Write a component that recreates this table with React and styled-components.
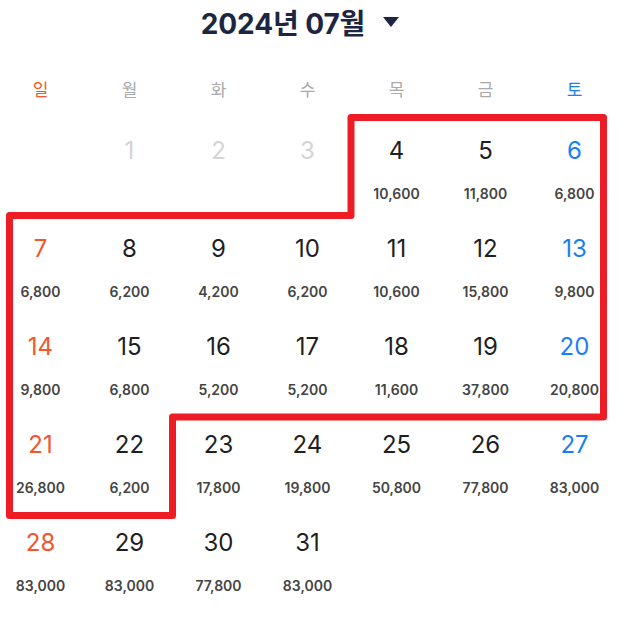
import styled, { createGlobalStyle } from 'styled-components'

const GlobalStyle = createGlobalStyle`
    body{
        margin:0;
        background:#fff;
        font-family:Inter, "Noto Sans CJK KR", sans-serif;
    }
`;

const Wrap = styled.div`
    position:relative;
    width:625px;
    height:617px;
    overflow:hidden;
`;

const Header = styled.div`
    display:flex;
    align-items:center;
    justify-content:center;
    gap:18px;
    height:44px;
    padding-right:25px;
`;

const Title = styled.h1`
    margin:0;
    font-size:28px;
    font-weight:700;
    letter-spacing:-0.1px;
    color:#1c2541;
`;

const Arrow = styled.svg`
    display:block;
`;

const Grid = styled.div`
    display:grid;
    grid-template-columns:repeat(7, 89px);
    width:623px;
    margin-left:-4px;
`;

const WeekRow = styled(Grid)`
    margin-top:24px;
    height:40px;
    align-items:center;
`;

const WeekDay = styled.div`
    text-align:center;
    font-family:"Noto Sans CJK KR", sans-serif;
    font-size:17px;
    color:${p => p.$tone === 'sun' ? '#f4552c' : p.$tone === 'sat' ? '#1b7ef4' : '#aaaaaa'};
`;

const Cell = styled.div`
    height:98px;
    padding-top:29px;
    box-sizing:border-box;
    display:flex;
    flex-direction:column;
    align-items:center;
`;

const DayNum = styled.span`
    font-size:24px;
    line-height:28px;
    color:${p => p.$past ? '#d4d4d4' : p.$tone === 'sun' ? '#f4552c' : p.$tone === 'sat' ? '#1b7ef4' : '#1f1f1f'};
`;

const Price = styled.span`
    margin-top:21px;
    font-size:14px;
    line-height:16px;
    font-weight:600;
    color:#444;
`;

const Outline = styled.svg`
    position:absolute;
    left:0;
    top:0;
    pointer-events:none;
`;

const prices = {
    4:'10,600',5:'11,800',6:'6,800',7:'6,800',8:'6,200',9:'4,200',10:'6,200',
    11:'10,600',12:'15,800',13:'9,800',14:'9,800',15:'6,800',16:'5,200',17:'5,200',
    18:'11,600',19:'37,800',20:'20,800',21:'26,800',22:'6,200',23:'17,800',24:'19,800',
    25:'50,800',26:'77,800',27:'83,000',28:'83,000',29:'83,000',30:'77,800',31:'83,000'
};

const weekDays = ['일','월','화','수','목','금','토'];

function toneOf(i){
    if (i % 7 === 0) return 'sun';
    if (i % 7 === 6) return 'sat';
    return '';
}

function App(){
    const cells = [];
    for (let i = 0; i < 35; i++){
        const day = i;
        if (day < 1 || day > 31){
            cells.push(<Cell key={i} />);
            continue;
        }
        cells.push(
            <Cell key={i}>
                <DayNum $past={day < 4} $tone={toneOf(i)}>{day}</DayNum>
                {prices[day] && <Price>{prices[day]}</Price>}
            </Cell>
        );
    }

    return (
        <>
        <GlobalStyle />
        <Wrap>
            <Header>
                <Title>2024년 07월</Title>
                <Arrow width="16" height="10" viewBox="0 0 16 10">
                    <path d="M0 0H16L8 10Z" fill="#1c2541" />
                </Arrow>
            </Header>
            <WeekRow>
                {weekDays.map((d, i) => <WeekDay key={d} $tone={toneOf(i)}>{d}</WeekDay>)}
            </WeekRow>
            <Grid>{cells}</Grid>
            <Outline width="625" height="617" viewBox="0 0 625 617">
                <path
                    d="M351 117.5H603.5V417H172.5V515.5H9.5V215.5H351Z"
                    fill="none"
                    stroke="#ee1c25"
                    strokeWidth="7"
                    strokeLinejoin="round"
                />
            </Outline>
        </Wrap>
        </>
    )
}

export default App;
